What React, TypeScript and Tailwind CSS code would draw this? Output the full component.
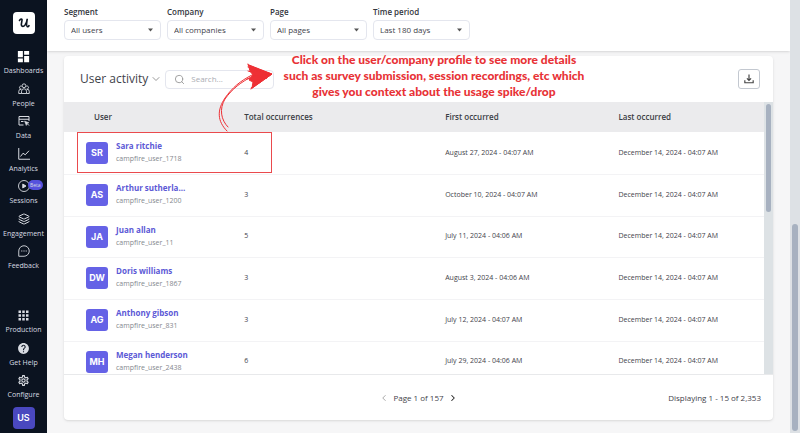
import type { ReactNode } from "react";
import { ChevronDown, ChevronLeft, ChevronRight, Layers, Search } from "lucide-react";
import { MdApps, MdDashboard, MdHelp, MdOutlineSettings } from "react-icons/md";

interface UserRow {
  initials: string;
  name: string;
  id: string;
  total: number;
  first: string;
  last: string;
}

const LAST_SEEN = "December 14, 2024 - 04:07 AM";

const rows: UserRow[] = [
  { initials: "SR", name: "Sara ritchie", id: "campfire_user_1718", total: 4, first: "August 27, 2024 - 04:07 AM", last: LAST_SEEN },
  { initials: "AS", name: "Arthur sutherla...", id: "campfire_user_1200", total: 3, first: "October 10, 2024 - 04:07 AM", last: LAST_SEEN },
  { initials: "JA", name: "Juan allan", id: "campfire_user_11", total: 5, first: "July 11, 2024 - 04:06 AM", last: LAST_SEEN },
  { initials: "DW", name: "Doris williams", id: "campfire_user_1867", total: 3, first: "August 3, 2024 - 04:06 AM", last: LAST_SEEN },
  { initials: "AG", name: "Anthony gibson", id: "campfire_user_831", total: 3, first: "July 12, 2024 - 04:07 AM", last: LAST_SEEN },
  { initials: "MH", name: "Megan henderson", id: "campfire_user_2438", total: 6, first: "July 29, 2024 - 04:06 AM", last: LAST_SEEN },
];

const filters = [
  { id: "segment", label: "Segment", value: "All users" },
  { id: "company", label: "Company", value: "All companies" },
  { id: "page", label: "Page", value: "All pages" },
  { id: "period", label: "Time period", value: "Last 180 days" },
];

function PeopleIcon() {
  return (
    <svg viewBox="0 0 24 24" className="size-3" fill="none" stroke="currentColor" strokeWidth="1.8">
      <circle cx="12" cy="5.5" r="3.8" />
      <path d="M7.5 6.5a3 3 0 1 0-1 5.5M16.5 6.5a3 3 0 1 1 1 5.5" />
      <path d="M7 21v-4.5a5 5 0 0 1 10 0V21zM7 21H1.5v-4a4.5 4.5 0 0 1 5-4.5M17 21h5.5v-4a4.5 4.5 0 0 0-5-4.5" />
    </svg>
  );
}

function DataIcon() {
  return (
    <svg viewBox="0 0 24 24" className="size-3" fill="none" stroke="currentColor" strokeWidth="2">
      <path d="M11 20H2V3h20v9M2 8.5h20M6 13h5" />
      <path d="m13 12 9 3.5-3.8 1.6L16.500 21z" fill="currentColor" strokeWidth="1" />
      <path d="m18 17 4 4" />
    </svg>
  );
}

function AnalyticsIcon() {
  return (
    <svg viewBox="0 0 24 24" className="size-3" fill="none" stroke="currentColor" strokeWidth="2">
      <path d="M1.5 0v22.5H24" />
      <path d="m5 17 5-6.5 4.5 3L22 5.5" />
    </svg>
  );
}

function SessionsIcon() {
  return (
    <svg viewBox="0 0 24 24" className="size-3" fill="none" stroke="currentColor" strokeWidth="1.8">
      <circle cx="12" cy="12" r="11" />
      <path d="m9.5 8 6.5 4-6.5 4z" fill="currentColor" />
    </svg>
  );
}

function FeedbackIcon() {
  return (
    <svg viewBox="0 0 24 24" className="size-3" fill="none" stroke="currentColor" strokeWidth="1.8">
      <path d="M1.5 22.5V12A10.5 10.5 0 1 1 12 22.5z" />
      <path d="M6.5 12h2.2M10.9 12h2.2M15.3 12h2.2" strokeWidth="2.4" />
    </svg>
  );
}

function NavItem({ label, badge, children }: { label: string; badge?: string; children: ReactNode }) {
  return (
    <a href="#" className="relative flex h-8 flex-col items-center gap-[3px] text-[#d9dce2] odd:h-[33px]">
      <span className="flex h-3 items-center">{children}</span>
      <span className="text-[7px] leading-3 font-medium">{label}</span>
      {badge && (
        <span className="absolute top-0 left-7 rounded-full bg-[#5552dd] px-0.5 text-[5px] leading-[10px] text-[#d9dce2]">
          {badge}
        </span>
      )}
    </a>
  );
}

function Sidebar() {
  return (
    <aside className="flex w-[47px] shrink-0 flex-col justify-between bg-[#0b1320] pt-3 pb-1">
      <div>
        <a href="#" aria-label="Home" className="mx-auto mb-4 flex size-[22px] items-center justify-center rounded-sm bg-white">
          <svg viewBox="0 0 24 24" className="size-3" fill="none" stroke="#0b1320" strokeWidth="3.2" strokeLinecap="round">
            <path d="M3 7c2-3.5 5.5-4 5-.5L6.8 14c-.8 5 3.5 6.5 7 2.5C17 12.5 18 8 18.5 3.5 17.5 10 16 19 19 19.5c1.5.2 2.5-1 3-2.2" />
          </svg>
        </a>
        <nav className="flex flex-col">
          <NavItem label="Dashboards"><MdDashboard className="size-[15px]" color="#fff" /></NavItem>
          <NavItem label="People"><PeopleIcon /></NavItem>
          <NavItem label="Data"><DataIcon /></NavItem>
          <NavItem label="Analytics"><AnalyticsIcon /></NavItem>
          <NavItem label="Sessions" badge="Beta"><SessionsIcon /></NavItem>
          <NavItem label="Engagement"><Layers className="size-3" /></NavItem>
          <NavItem label="Feedback"><FeedbackIcon /></NavItem>
        </nav>
      </div>
      <div>
        <NavItem label="Production"><MdApps className="size-[15px]" /></NavItem>
        <NavItem label="Get Help"><MdHelp className="size-[13px]" /></NavItem>
        <NavItem label="Configure"><MdOutlineSettings className="size-[13px]" /></NavItem>
        <button className="mx-auto flex size-[22px] items-center justify-center rounded-sm bg-[#4a48bf] font-[Inter] text-[9px] font-semibold text-white">
          US
        </button>
      </div>
    </aside>
  );
}

function Filter({ id, label, value }: { id: string; label: string; value: string }) {
  return (
    <div className="w-[97px]">
      <label htmlFor={id} className="block text-[8px] leading-4 font-semibold text-[#33363d]">{label}</label>
      <div className="relative">
        <select
          id={id}
          className="block h-5 w-full appearance-none rounded-sm border border-[#e4e6ee] bg-white px-1.5 text-[8px] text-[#3f434b]"
        >
          <option>{value}</option>
        </select>
        <svg viewBox="0 0 10 6" className="pointer-events-none absolute top-2 right-2 h-1 w-[5px]">
          <path d="M0 0h10L5 6z" fill="#555" />
        </svg>
      </div>
    </div>
  );
}

// Hand-drawn arrow that points from the first row to the note
function SketchArrow() {
  return (
    <svg
      viewBox="0 0 64 74"
      className="pointer-events-none absolute -top-[42px] left-[148px] h-[74px] w-16"
      fill="none"
      stroke="#ee3035"
      strokeLinecap="round"
      strokeLinejoin="round"
    >
      <path d="M15 71C5 61 5 50 13 38 20 28 28 21 40 15" strokeWidth="1" />
      <path d="M16 67C9 60 7 49 13 39 20 29 29 22 41 16" strokeWidth="1" />
      <path d="M37 5 60 14 40 28l1-6-4-2 4-5-3-4z" fill="#ee3035" strokeWidth="1" />
      <path d="m36 5 23 9-17-4 15 5-16 1 14 2-13 3 8 0-11 7M36 7l24 7-21 15M35 19l9-2M36 4l3 8-3-1" strokeWidth="1" />
    </svg>
  );
}

function UserTable() {
  return (
    <div className="relative">
      <div className="flex h-[273px] overflow-hidden border-b border-[#e8e9eb]">
        <div className="min-w-0 flex-1">
          <table className="w-full table-fixed text-left text-[7px] text-[#3f434b]">
            <thead className="bg-[#ebebed] text-[8px] text-[#3a3d44]">
              <tr className="h-[30px]">
                <th className="w-[26%] pl-[30px] font-semibold">User</th>
                <th className="w-[29%] font-semibold">Total occurrences</th>
                <th className="w-[25%] font-semibold">First occurred</th>
                <th className="w-[21%] font-semibold">Last occurred</th>
              </tr>
            </thead>
            <tbody>
              {rows.map((row) => (
                <tr key={row.id} className="h-[42px] border-b border-[#f3f3f5] nth-[3n]:h-[41px]">
                  <td className="pl-[22px]">
                    <div className="flex items-center gap-2">
                      <span className="flex size-[22px] items-center justify-center rounded-[3px] bg-[#6562e6] font-[Inter] text-[9px] font-bold text-white">
                        {row.initials}
                      </span>
                      <div>
                        <a href="#" className="block text-[8px] leading-3 font-bold text-[#5c59d6]">{row.name}</a>
                        <div className="text-[7px] leading-[14px] text-[#85888e]">{row.id}</div>
                      </div>
                    </div>
                  </td>
                  <td>{row.total}</td>
                  <td>{row.first}</td>
                  <td>{row.last}</td>
                </tr>
              ))}
            </tbody>
          </table>
        </div>
        <div className="w-[9px] shrink-0 bg-[#dde2e5] px-0.5 pt-0.5">
          <div className="h-[108px] rounded-full bg-[#a7b1c0]" />
        </div>
      </div>
      <div className="pointer-events-none absolute top-[30px] left-[13px] h-[41px] w-[195px] border border-[#ea4a4d]" />
      <SketchArrow />
    </div>
  );
}

export default function App() {
  return (
    <div className="flex min-h-screen bg-[#f6f6f7] font-['Open_Sans',sans-serif]">
      <Sidebar />
      <main className="flex min-w-0 flex-1 flex-col">
        <header className="flex gap-1.5 bg-white px-[17px] pt-1 pb-[11px] shadow-sm">
          {filters.map((filter) => (
            <Filter key={filter.id} {...filter} />
          ))}
        </header>

        <section className="relative mx-[17px] mt-[5px] rounded-sm bg-white shadow-sm">
          <div className="flex h-[46px] items-center pr-[13px] pl-4">
            <button className="flex items-center gap-0.5 text-[12px] text-[#3f434b]">
              User activity
              <ChevronDown className="size-3 text-[#777]" strokeWidth={1.5} />
            </button>
            <label className="ml-[3px] flex h-[19px] w-[109px] items-center gap-1.5 rounded-sm border border-[#e4e6ee] px-2">
              <Search className="size-[11px] shrink-0 text-[#999]" />
              <input type="search" aria-label="Search" placeholder="Search..." className="w-full min-w-0 text-[8px] outline-none placeholder:text-[#aaadb3]" />
            </label>
            <button aria-label="Download" className="ml-auto flex h-5 w-[22px] items-center justify-center rounded-[3px] border border-[#c3c8d0] text-[#444]">
              <svg viewBox="0 0 24 24" className="size-2.5" fill="none" stroke="currentColor" strokeWidth="2.8">
                <path d="M12 1v14M7 10.5l5 5 5-5M2 15v6h20v-6" />
              </svg>
            </button>
          </div>
          <p className="pointer-events-none absolute -top-1 left-[210px] w-80 text-center font-[Lato] text-[12px] leading-4 font-black text-[#e83236]">
            Click on the user/company profile to see more details
            <br />
            such as survey submission, session recordings, etc which
            <br />
            gives you context about the usage spike/drop
          </p>

          <UserTable />

          <footer className="grid h-[45px] grid-cols-[1fr_auto_1fr] items-center px-3 text-[8px] text-[#3f434b]">
            <div className="col-start-2 flex items-center gap-1">
              <button aria-label="Previous page" className="text-[#999]"><ChevronLeft className="size-2.5" /></button>
              <span>Page 1 of 157</span>
              <button aria-label="Next page" className="text-[#222]"><ChevronRight className="size-2.5" strokeWidth={2.5} /></button>
            </div>
            <span className="text-right">Displaying 1 - 15 of 2,353</span>
          </footer>
        </section>
      </main>
      <div className="flex w-2.5 shrink-0 flex-col justify-end bg-[#dde1e5] px-0.5 pb-0.5">
        <div className="h-[207px] rounded-full bg-[#a7b1c0]" />
      </div>
    </div>
  );
}
